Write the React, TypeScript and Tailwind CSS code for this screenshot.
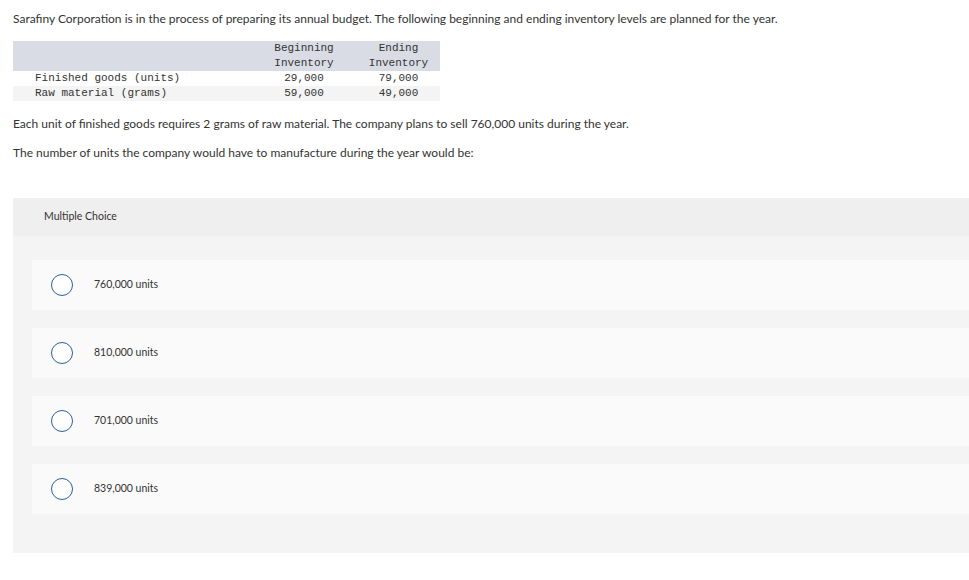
import React from 'react';

const options = ['760,000 units', '810,000 units', '701,000 units', '839,000 units'];

const rows = [
  { label: 'Finished goods (units)', begin: '29,000', end: '79,000', bg: 'bg-white' },
  { label: 'Raw material (grams)', begin: '59,000', end: '49,000', bg: 'bg-[#f4f4f4]' },
];

export default function App() {
  return (
    <div className="min-h-[580px] w-full bg-white text-[#333] font-['Lato','Liberation_Sans',sans-serif]">
      <div className="px-[13px] pt-[11px]">
        <p className="text-[12px] leading-[15px]">
          Sarafiny Corporation is in the process of preparing its annual budget. The following beginning and ending inventory levels are planned for the year.
        </p>

        <div className="mt-[15px] w-[427px] font-['Liberation_Mono',monospace] text-[11px] leading-[15px]">
          <div className="grid grid-cols-[256px_70px_101px] bg-[#d9dce5]">
            <div />
            <div className="text-center">
              Beginning
              <br />
              Inventory
            </div>
            <div className="pl-[18px] text-center">
              Ending
              <br />
              Inventory
            </div>
          </div>
          {rows.map((r) => (
            <div key={r.label} className={`grid grid-cols-[256px_70px_101px] ${r.bg}`}>
              <div className="pl-[22px] whitespace-pre">{r.label}</div>
              <div className="text-center">{r.begin}</div>
              <div className="pl-[18px] text-center">{r.end}</div>
            </div>
          ))}
        </div>

        <p className="mt-[15px] text-[12px] leading-[15px]">
          Each unit of finished goods requires 2 grams of raw material. The company plans to sell 760,000 units during the year.
        </p>
        <p className="mt-[14px] text-[12px] leading-[15px]">
          The number of units the company would have to manufacture during the year would be:
        </p>
      </div>

      <div className="ml-[13px] mt-[38px] bg-[#f4f4f4] pb-[39px]">
        <div className="flex h-[38px] items-center bg-[#efefef] pl-[31px] text-[10.5px]">
          Multiple Choice
        </div>
        <div className="flex flex-col gap-[18px] pl-[19px] pt-[24px]">
          {options.map((o) => (
            <div key={o} className="flex h-[50px] items-center bg-[#fafafa] pl-[19px]">
              <span className="box-border h-[22px] w-[22px] rounded-full border-[1.5px] border-[#2a5f9e] bg-white" />
              <span className="ml-[21px] text-[10.5px]">{o}</span>
            </div>
          ))}
        </div>
      </div>
    </div>
  );
}
